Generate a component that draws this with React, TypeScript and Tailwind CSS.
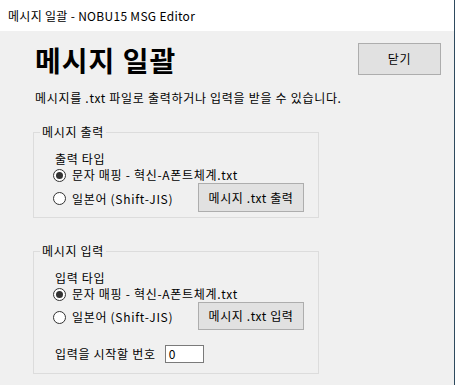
import { ReactNode } from 'react';

function Radio({ checked, label }: { checked?: boolean; label: string }) {
  return (
    <div className="flex items-center h-[16px]">
      <span className="w-[13px] h-[13px] rounded-full border border-[#333333] bg-white flex items-center justify-center">
        {checked && <span className="w-[7px] h-[7px] rounded-full bg-[#333333]" />}
      </span>
      <span className="ml-[6px]">{label}</span>
    </div>
  );
}

function WinButton({ children, className }: { children: ReactNode; className: string }) {
  return (
    <button className={`bg-[#e1e1e1] border border-[#adadad] flex items-center justify-center tracking-[0.6px] ${className}`}>
      {children}
    </button>
  );
}

function Group({ title, children }: { title: string; children: ReactNode }) {
  return (
    <fieldset className="border border-[#dcdcdc]">
      <legend className="ml-[6px] px-[2px] leading-[16px]">{title}</legend>
      <div className="pl-[19px] pr-[14px]">{children}</div>
    </fieldset>
  );
}

export default function App() {
  return (
    <div className="w-[455px] h-[385px] flex flex-col bg-[#f0f0f0] border-r border-[#2e4a5e] text-black text-[12px] tracking-[0.7px] font-['Noto_Sans_CJK_KR',sans-serif] overflow-hidden">
      {/* Title bar */}
      <div className="h-[31px] shrink-0 bg-white flex items-center pl-[8px] leading-[16px] tracking-[0.3px]">
        메시지 일괄 - NOBU15 MSG Editor
      </div>

      <div className="flex-1 flex flex-col pl-[33px] pr-[13px]">
        {/* Header */}
        <div className="flex justify-between items-start pt-[12px]">
          <h1 className="ml-[2px] mt-[1px] text-[28px] leading-[32px] font-bold tracking-[1px]">메시지 일괄</h1>
          <WinButton className="w-[83px] h-[32px]">닫기</WinButton>
        </div>
        <p className="ml-[2px] mt-[14px] leading-[16px]">메시지를 .txt 파일로 출력하거나 입력을 받을 수 있습니다.</p>

        {/* Output */}
        <div className="mt-[18px] w-[286px]">
          <Group title="메시지 출력">
            <div className="pt-[11px] pb-[5px]">
              <div className="ml-[2px] leading-[16px]">출력 타입</div>
              <Radio checked label="문자 매핑 - 혁신-A폰트체계.txt" />
              <div className="flex items-center">
                <div className="pt-[2px]">
                  <Radio label="일본어 (Shift-JIS)" />
                </div>
                <WinButton className="ml-auto w-[106px] h-[29px]">메시지 .txt 출력</WinButton>
              </div>
            </div>
          </Group>
        </div>

        {/* Input */}
        <div className="mt-[25px] w-[286px]">
          <Group title="메시지 입력">
            <div className="pt-[11px] pb-[10px]">
              <div className="ml-[2px] leading-[16px]">입력 타입</div>
              <Radio checked label="문자 매핑 - 혁신-A폰트체계.txt" />
              <div className="flex items-center">
                <div className="pt-[2px]">
                  <Radio label="일본어 (Shift-JIS)" />
                </div>
                <WinButton className="ml-auto w-[106px] h-[28px]">메시지 .txt 입력</WinButton>
              </div>
              <div className="flex items-center mt-[15px] ml-[2px]">
                <span className="leading-[16px]">입력을 시작할 번호</span>
                <div className="ml-[9px] w-[39px] h-[18px] bg-white border border-[#7a7a7a] pl-[3px] leading-[16px]">0</div>
              </div>
            </div>
          </Group>
        </div>
      </div>
    </div>
  );
}
